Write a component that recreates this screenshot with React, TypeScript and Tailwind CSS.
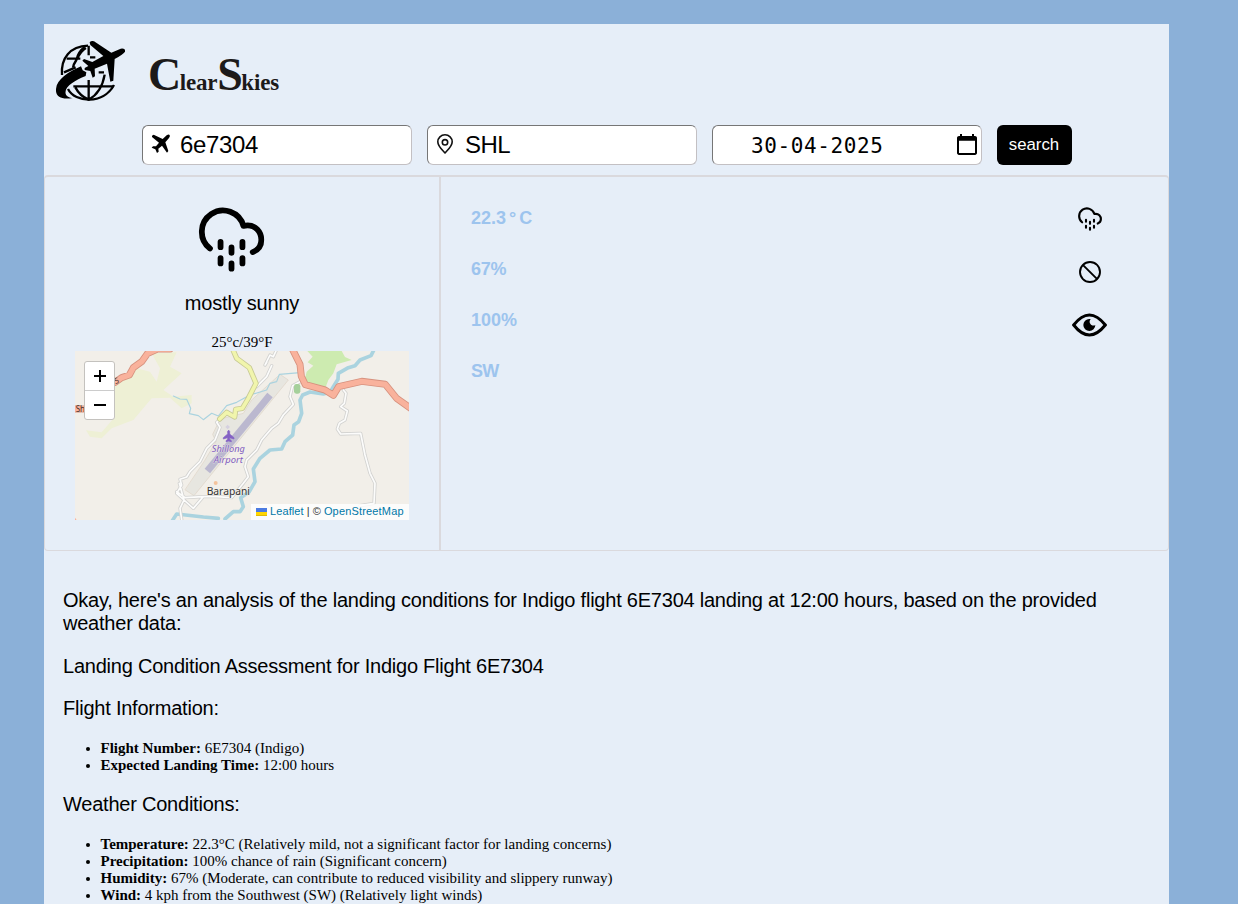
import React from "react";

const SANS = "font-['Liberation_Sans',sans-serif]";

function Logo() {
  return (
    <svg className="mt-4 ml-3 h-[62px] w-[70px] shrink-0" viewBox="48 61 210 186" fill="none" stroke="#000">
      <g strokeWidth="7">
        <path d="M66 166C62 115 90 80 144 78" />
        <path d="M146 78V107M80 117H121M72 158L107 143M138 85C124 92 116 108 109 121C103 130 100 136 99 144M134 82C121 92 113 104 110 119" />
        <path d="M84 208C105 250 190 255 222 196" />
        <path d="M146 181V241M100 200H220M106 203C116 222 130 233 146 240C170 227 188 200 194 165M176 158H192M150 113H166" />
      </g>
      <path
        d="M149 68Q154 62 162 65L214 99L242 87Q257 85 255 96Q251 103 224 118L220 183L211 186L201 132L164 147L165 170L158 174L151 154L134 151L134 145L145 139L127 123L132 118L157 127L190 109L151 76Z"
        fill="#000"
        stroke="none"
      />
      <path
        d="M123 140L128 152L139 158L137 169C105 182 72 201 77 222C80 232 91 234 99 235C70 240 50 235 48 215C45 183 82 158 123 140Z"
        fill="#000"
        stroke="none"
      />
    </svg>
  );
}

function RainIcon({ className }: { className: string }) {
  return (
    <svg className={className} viewBox="0 0 198 196" fill="none" stroke="#000" strokeWidth="17.5" strokeLinecap="round" strokeLinejoin="round">
      <path d="M34 125A64 64 0 1 1 135 57C173 49 189 78 189 99C189 116 179 130 163 136" />
      <path d="M66 105V121M132 105V121M99 122V138M66 154V170M132 154V170M99 170V186" />
    </svg>
  );
}

function PlaneIcon() {
  return (
    <svg className="-mt-0.5 ml-2 h-5 w-5 shrink-0" viewBox="0 0 60 60">
      <path
        d="M3 5L8 2L35 15L47 4Q53 0 56 3Q58 7 54 12L43 25L52 51L48 56L33 35L22 44L23 53L18 57L13 46L2 41L6 37L15 37L24 26L3 9Z"
        fill="#000"
      />
    </svg>
  );
}

function PinIcon() {
  return (
    <svg className="-mt-0.5 ml-[9px] h-5 w-4 shrink-0" viewBox="0 0 16 20" fill="none" stroke="#111" strokeWidth="1.6" strokeLinejoin="round">
      <path d="M8 19C6 16.5 .8 12.6 .8 7.8A7.2 7 0 0 1 15.2 7.8C15.2 12.6 10 16.5 8 19Z" />
      <circle cx="8" cy="8.3" r="2.7" />
    </svg>
  );
}

function CalendarIcon() {
  return (
    <svg className="-mt-0.5 mr-1 ml-auto h-[21px] w-5 shrink-0" viewBox="2 1 20 22" preserveAspectRatio="none">
      <path d="M20 3h-1V1h-2v2H7V1H5v2H4c-1.1 0-2 .9-2 2v16c0 1.1.9 2 2 2h16c1.1 0 2-.9 2-2V5c0-1.1-.9-2-2-2zm0 18H4V8h16v13z" />
    </svg>
  );
}

function BanIcon() {
  return (
    <svg className="mt-[29px] h-6 w-6" viewBox="0 0 24 24" fill="none" stroke="#000" strokeWidth="1.9">
      <circle cx="12" cy="12" r="10" />
      <path d="M4.8 4.8L19.2 19.2" />
    </svg>
  );
}

function EyeIcon() {
  return (
    <svg className="mt-[29px] h-6 w-[35px]" viewBox="0 0 105 72">
      <path d="M5 36Q52-24 100 36Q52 96 5 36Z" fill="none" stroke="#000" strokeWidth="9" strokeLinejoin="miter" />
      <path d="M52 18A18 18 0 1 0 70 36Q65 40 57 35Q49 27 56 18Z" fill="#000" />
    </svg>
  );
}

const LANES =
  "M450 222L440 232L450 247L435 285L410 310L390 350L360 380L350 396L330 403L335 420L320 445L342 465L330 490L336 530M328 415L342 465L370 490L400 455L440 455L485 458L520 415L535 395L525 365L530 345L560 315L575 285L605 250L625 235L640 210L670 178L660 155L668 122L690 110M320 440L345 458L400 455M618 18L610 35L600 30L585 60L590 52M605 62L590 95L560 125M820 135L828 145L823 175L812 185L832 198L825 225L808 235L802 252L812 267L872 265L885 330L900 385L915 415L912 475L870 482";

const HIGHWAYS =
  "M100 124L135 112L155 98L178 90L190 68L215 50L232 26L262 12L300 12M5 192H70M665 8L690 58L694 94L706 119L765 135L790 151L806 125L875 109L946 118L980 160L1025 192";

const AIRPORT_ROAD = "M487 10L500 40L538 68L558 115L535 160L517 190L497 193L494 216L470 202L449 222";

function MapDrawing() {
  return (
    <svg className="block h-[169px] w-[334px]" viewBox="15 18 1002 507" fill="none" strokeLinejoin="round" strokeLinecap="round">
      <rect x="15" y="18" width="1002" height="507" fill="#f2efe9" />
      <path
        d="M245 25L320 22L300 65L335 85L280 135L310 155L365 150L365 175L335 190L300 158L245 160L190 225L125 250L95 280L60 275L48 256L95 262L135 215L100 180L130 110L185 95L200 70L240 80L260 110L270 70Z"
        fill="#eef0d5"
      />
      <path d="M712 18H815L825 36L845 45L800 58L790 85L775 105L765 132L735 135L700 120L710 80L730 62L713 52L728 35Z" fill="#cdebb0" />
      <path d="M346 435L372 452L655 105L630 88L545 165L520 205L450 222L428 268L438 290L405 345Z" fill="#e7e6e0" stroke="#ded3c5" strokeWidth="2" />
      <path d="M412 378L600 150" stroke="#bbb8cf" strokeWidth="21" strokeLinecap="butt" />
      <g stroke="#aad3df">
        <path
          d="M310 153L330 162L350 163L362 190L358 206L385 212L400 224L425 205L445 213L470 182L500 172L540 150L590 135L600 115L620 110L628 88L690 83"
          strokeWidth="3.5"
        />
        <path
          d="M912 14L903 32L870 45L855 62L835 68L805 85L804 103L790 125L780 142L760 147L720 141L698 150L690 165L695 205L686 230L672 240L668 270L645 290L635 312L600 315L570 340L550 372L555 410L538 440L512 458L520 485L510 500L490 500L465 522M305 530L320 507L400 516L445 520"
          strokeWidth="11"
        />
      </g>
      <path d={LANES} stroke="#d2d2d0" strokeWidth="10" />
      <path d={LANES} stroke="#fcfcfb" strokeWidth="5" />
      <rect x="672" y="117" width="19" height="29" rx="7" fill="#a5d09b" />
      <path d={AIRPORT_ROAD} stroke="#c7c995" strokeWidth="16" />
      <path d={AIRPORT_ROAD} stroke="#f1f5ac" strokeWidth="11" />
      <path d={HIGHWAYS} stroke="#d6917e" strokeWidth="21" />
      <path d={HIGHWAYS} stroke="#f9b29c" strokeWidth="16" />
      <path d="M15 518L20 525H15Z" fill="#f9b29c" />
      <g fill="#4b3029" className="font-['Noto_Sans',sans-serif]" fontSize="24">
        <text x="17" y="200">Shi</text>
        <text x="136" y="117" transform="rotate(-18 136 117)">5</text>
      </g>
      <path
        d="M473 259Q476 252 479 259V267L492 278V282L479 278V283L484 287V290L476 288L468 290V287L473 283V278L460 282V278L473 267Z"
        fill="#8461c4"
        stroke="#8461c4"
        strokeWidth="2"
      />
      <path d="M473 239L480 246L473 253L466 246Z" fill="#d5d0df" />
      <g className="font-['Noto_Sans',sans-serif] italic" fill="#7f5bc0" fontSize="29" textAnchor="middle" stroke="#f2efe9" strokeWidth="2" paintOrder="stroke">
        <text x="475" y="321" textLength="99" lengthAdjust="spacingAndGlyphs">Shillong</text>
        <text x="475" y="354" textLength="87" lengthAdjust="spacingAndGlyphs">Airport</text>
      </g>
      <circle cx="437" cy="414" r="6" fill="#f4c39c" />
      <text
        x="410"
        y="449"
        textLength="130"
        lengthAdjust="spacingAndGlyphs"
        className="font-['Noto_Sans',sans-serif]"
        fontSize="30"
        fill="#333"
        stroke="#f2efe9"
        strokeWidth="2"
        paintOrder="stroke"
      >
        Barapani
      </text>
    </svg>
  );
}

function MapView() {
  return (
    <div className={`relative h-[169px] w-[334px] overflow-hidden ${SANS}`}>
      <MapDrawing />
      <div className="absolute top-[10px] left-[9px] flex h-[59px] w-[31px] flex-col divide-y divide-[#ccc] rounded-[3px] border border-[#c4c2be] bg-white text-black">
        <button type="button" aria-label="Zoom in" className="flex h-[29px] items-center justify-center">
          <svg className="h-3 w-3" viewBox="0 0 12 12" stroke="#000" strokeWidth="2"><path d="M0 6H12M6 0V12" /></svg>
        </button>
        <button type="button" aria-label="Zoom out" className="flex h-[29px] items-center justify-center">
          <svg className="h-3 w-3" viewBox="0 0 12 12" stroke="#000" strokeWidth="2"><path d="M0 6H12" /></svg>
        </button>
      </div>
      <div className="absolute right-0 bottom-0 flex h-4 w-[158px] items-center bg-white/80 pb-[2px] pl-[5px] text-[11px] leading-[14px] whitespace-pre text-[#333]">
        <svg className="mt-0.5 mr-[3px] h-2 w-[11px]" viewBox="0 0 11 8">
          <path fill="#4c7be1" d="M0 0h11v4H0z" />
          <path fill="#ffd500" d="M0 4h11v3H0z" />
          <path fill="#e0bc00" d="M0 7h11v1H0z" />
        </svg>
        <span className="tracking-[0.1px] text-[#0078a8]">Leaflet</span>
        <span> | © </span>
        <span className="tracking-[0.17px] text-[#0078a8]">OpenStreetMap</span>
      </div>
    </div>
  );
}

const FIELD =
  "flex h-10 w-[270px] items-center rounded-[6px] border border-t-[#767676] border-l-[#767676] border-r-[#c3c0c3] border-b-[#c3c0c3] bg-white text-2xl text-black";

const HEADING = `${SANS} text-[20px] leading-[23px] tracking-[-0.225px] whitespace-nowrap text-black`;
const LIST = "ml-[37.5px] list-disc text-[15px] leading-[17px] whitespace-nowrap";

export default function App() {
  return (
    <div className="h-[904px] overflow-hidden bg-[#8bb0d8] pt-6 pl-11 font-['Liberation_Serif',serif] text-black">
      <main className="h-[880px] w-[1125px] bg-[#e6eef8]">
        <header className="flex h-[101px]">
          <Logo />
          <h1 className="mt-[25px] ml-[22px] text-[23px] leading-[52px] font-bold tracking-[-0.2px] whitespace-nowrap text-[#1c1a1a]">
            <span className="text-[46px] tracking-[-1.5px]">C</span>lear<span className="text-[46px] tracking-[-1.5px]">S</span>kies
          </h1>
        </header>
        <form className={`flex h-[50px] gap-[15px] pl-[98px] ${SANS}`}>
          <div className={FIELD}>
            <PlaneIcon />
            <span className="ml-[9px] tracking-[-0.35px]">6e7304</span>
          </div>
          <div className={FIELD}>
            <PinIcon />
            <span className="ml-3 tracking-[-0.5px]">SHL</span>
          </div>
          <div className={FIELD}>
            <span className="mt-0.5 ml-[38px] font-['DejaVu_Sans_Mono',monospace] text-[21px] tracking-[0.6px]">30-04-2025</span>
            <CalendarIcon />
          </div>
          <button type="button" className="h-10 w-[75px] rounded-[6px] bg-black pr-px text-[16.8px] text-white">search</button>
        </form>
        <section className="flex h-[376px] rounded-[4px] border border-t-2 border-[#dad9dd]">
          <div className="flex w-[396px] flex-col items-center border-r-2 border-[#dad9dd]">
            <RainIcon className="mt-[30px] h-[65px] w-[66px] -translate-x-[10.5px]" />
            <p className={`mt-[19px] text-[20px] leading-[24px] tracking-[-0.2px] ${SANS}`}>mostly sunny</p>
            <p className="mt-[19px] text-[15px] leading-[17px]">25°c/39°F</p>
            <MapView />
          </div>
          <div className="flex flex-1 justify-between pr-[61px] pl-[30px]">
            <div className={`pt-[29px] text-[18px] leading-[24px] font-bold text-[#9dc4ee] ${SANS}`}>
              <p className="mb-[27px]">22.3<span className="mx-[3px]">°</span>C</p>
              <p className="mb-[27px] tracking-[-0.2px]">67%</p>
              <p className="mb-[27px]">100%</p>
              <p className="tracking-[-0.8px]">SW</p>
            </div>
            <div className="flex w-[35px] flex-col items-center pt-[30px]">
              <RainIcon className="h-6 w-6" />
              <BanIcon />
              <EyeIcon />
            </div>
          </div>
        </section>
        <article className="pt-[38px] pl-[19px]">
          <p className={HEADING}>
            Okay, here's an analysis of the landing conditions for Indigo flight 6E7304 landing at 12:00 hours, based on the provided
            <br />
            weather data:
          </p>
          <h2 className={`mt-5 ${HEADING}`}>Landing Condition Assessment for Indigo Flight 6E7304</h2>
          <h3 className={`mt-[19px] ${HEADING}`}>Flight Information:</h3>
          <ul className={`mt-5 ${LIST}`}>
            <li><b>Flight Number:</b> 6E7304 (Indigo)</li>
            <li><b>Expected Landing Time:</b> 12:00 hours</li>
          </ul>
          <h3 className={`mt-[19px] ${HEADING}`}>Weather Conditions:</h3>
          <ul className={`mt-5 ${LIST}`}>
            <li><b>Temperature:</b> 22.3°C (Relatively mild, not a significant factor for landing concerns)</li>
            <li><b>Precipitation:</b> 100% chance of rain (Significant concern)</li>
            <li><b>Humidity:</b> 67% (Moderate, can contribute to reduced visibility and slippery runway)</li>
            <li><b>Wind:</b> 4 kph from the Southwest (SW) (Relatively light winds)</li>
          </ul>
        </article>
      </main>
    </div>
  );
}
